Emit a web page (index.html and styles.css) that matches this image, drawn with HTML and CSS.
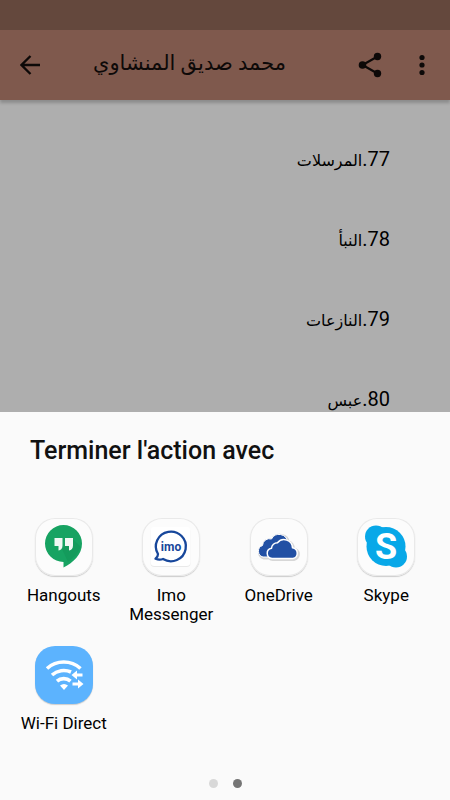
FILE: index.html
```html
<!DOCTYPE html>
<html lang="fr">
<head>
<meta charset="utf-8">
<meta name="viewport" content="width=device-width, initial-scale=1">
<title>Terminer l'action avec</title>
<link rel="stylesheet" href="styles.css">
</head>
<body>
<div class="screen">
  <div class="app">
    <div class="status-bar"></div>
    <header class="toolbar">
      <button class="icon-button" type="button" aria-label="Retour">
        <svg width="20" height="20" viewBox="0 0 20 20"><path d="M20 10H2M10.500 1L1.500 10l9 9" fill="none" stroke="#0d0908" stroke-width="2.300"/></svg>
      </button>
      <h1 class="toolbar-title" lang="ar" dir="rtl">محمد صديق المنشاوي</h1>
      <button class="icon-button" type="button" aria-label="Partager">
        <svg width="24" height="26" viewBox="0 0 24 26"><path d="M19.500 4.500L4.500 13l15 8.500" fill="none" stroke="#0d0908" stroke-width="2.200"/><g fill="#0d0908"><circle cx="19.500" cy="4.500" r="3.700"/><circle cx="4.500" cy="13" r="3.800"/><circle cx="19.500" cy="21.500" r="3.700"/></g></svg>
      </button>
      <button class="icon-button" type="button" aria-label="Plus d'options">
        <svg width="6" height="22" viewBox="0 0 6 22"><g fill="#0d0908"><circle cx="3" cy="3.500" r="2.600"/><circle cx="3" cy="11" r="2.600"/><circle cx="3" cy="18.500" r="2.600"/></g></svg>
      </button>
    </header>
    <ul class="suras" lang="ar" dir="rtl">
      <li><span>77.<span class="sura-name">المرسلات</span></span></li>
      <li><span>78.<span class="sura-name">النبأ</span></span></li>
      <li><span>79.<span class="sura-name">النازعات</span></span></li>
      <li><span>80.<span class="sura-name">عبس</span></span></li>
    </ul>
  </div>

  <section class="sheet" role="dialog" aria-labelledby="sheet-title">
    <h2 class="sheet-title" id="sheet-title">Terminer l'action avec</h2>
    <div class="targets">
      <button class="target" type="button">
        <span class="tile">
          <svg width="58" height="58" viewBox="0 0 58 58">
            <path d="M28.500 7a18.500 18.500 0 0 0 0 37v5.500c10-5 18.500-13 18.500-24A18.500 18.500 0 0 0 28.500 7z" fill="#17a362"/>
            <path d="M27 31l6 13 8-7 5-8-9-8.500z" fill="#149b5c"/>
            <path d="M19.500 20h8v7.500c0 3-1.500 4.500-4 5V28h-4zM30 20h8v7.500c0 3-1.500 4.500-4 5V28h-4z" fill="#f1f8f4"/>
          </svg>
        </span>
        <span class="label">Hangouts</span>
      </button>
      <button class="target" type="button">
        <span class="tile">
          <svg width="58" height="58" viewBox="0 0 58 58">
            <rect x="8.500" y="10" width="40" height="39" rx="4" fill="#e9e9e9"/>
            <rect x="8.500" y="9" width="40" height="39" rx="4" fill="#fff"/>
            <path d="M16 36A15 14.800 0 1 1 21 41c-2.500 1-5 .8-7.500-.2 1.700-1.200 2.500-2.500 2.500-4.800z" fill="#fff" stroke="#17479b" stroke-width="2.300" stroke-linejoin="round"/>
            <text class="imo-text" x="29" y="32.500" text-anchor="middle">imo</text>
          </svg>
        </span>
        <span class="label">Imo Messenger</span>
      </button>
      <button class="target" type="button">
        <span class="tile">
          <svg width="58" height="58" viewBox="0 0 58 58">
            <g transform="translate(-1 0)">
            <g stroke="#d7d7d7" stroke-width="3" fill="#d7d7d7" transform="translate(1 1)"><path d="M14 39a6 6 0 0 1-.5-11.500 7 7 0 0 1 9-6.500 8.500 8.500 0 0 1 16 3l-8 15zM23 40.500a5 5 0 0 1-.5-10 6 6 0 0 1 6-5.500 8.500 8.500 0 0 1 15 5 5.300 5.300 0 0 1 .5 10.500z"/></g>
            <path d="M14 39a6 6 0 0 1-.5-11.500 7 7 0 0 1 9-6.500 8.500 8.500 0 0 1 16 3l-8 15z" fill="#2250a4" stroke="#fff" stroke-width="1"/>
            <path d="M23 40.500a5.200 5.200 0 0 1-.5-10.300 6 6 0 0 1 6-5.500 8.500 8.500 0 0 1 15 5 5.500 5.500 0 0 1 .5 10.800z" fill="#2250a4" stroke="#fff" stroke-width="1.500"/>
            </g>
          </svg>
        </span>
        <span class="label">OneDrive</span>
      </button>
      <button class="target" type="button">
        <span class="tile">
          <svg width="58" height="58" viewBox="0 0 58 58">
            <g fill="#08a8e8"><circle cx="29" cy="28.500" r="19.500"/><circle cx="19" cy="18.500" r="11"/><circle cx="39" cy="38.500" r="11"/></g>
            <text class="skype-text" x="29" y="41" text-anchor="middle">S</text>
          </svg>
        </span>
        <span class="label">Skype</span>
      </button>
      <button class="target" type="button">
        <span class="tile tile-blue">
          <svg width="58" height="58" viewBox="0 0 58 58">
            <g fill="none" stroke="#fff" stroke-width="3.600">
              <path d="M12 22.500a25 25 0 0 1 33.500 0"/>
              <path d="M17 29a17.500 17.500 0 0 1 19-3"/>
              <path d="M22 35.200a10 10 0 0 1 13.500 0"/>
            </g>
            <g fill="#fff"><path d="M25 39.500q4-3 8 0l-4 4.500z"/>
            <path d="M36.500 29l5.500-4.500v3h5.500v3H42v3zM48.500 38l-5.500-4.500v3h-5.500v3H43v3z"/></g>
          </svg>
        </span>
        <span class="label">Wi-Fi Direct</span>
      </button>
    </div>
    <div class="pager"><span class="dot"></span><span class="dot dot-active"></span></div>
  </section>
</div>
</body>
</html>
```
FILE: styles.css
```css
* {
  box-sizing: border-box;
}

body {
  margin: 0;
  font-family: Roboto, "DejaVu Sans", sans-serif;
  color: #000;
}

button {
  padding: 0;
  border: 0;
  background: none;
  font: inherit;
  color: inherit;
}

svg {
  display: block;
}

.screen {
  position: relative;
  min-height: 100vh;
  background: #aeaeae;
  overflow: hidden;
}

.status-bar {
  height: 30px;
  background: #64483d;
}

.toolbar {
  display: flex;
  align-items: center;
  height: 70px;
  padding: 0 12px 0 10px;
  background: #7f594d;
  box-shadow: 0 3px 3px rgba(0, 0, 0, 0.2);
}

.icon-button {
  display: flex;
  align-items: center;
  justify-content: center;
  width: 40px;
  height: 40px;
  flex: none;
}

.icon-button:last-child {
  width: 32px;
  margin-left: 16px;
}

.toolbar-title {
  flex: 1;
  margin: 0;
  padding: 0 64px 4px 0;
  font-size: 21px;
  font-weight: 400;
  line-height: 32px;
  white-space: nowrap;
  color: #0d0908;
}

.suras {
  margin: 0;
  padding: 19px 60px 0;
  list-style: none;
  font-size: 20px;
}

.suras li {
  display: flex;
  align-items: center;
  height: 80px;
}

.sura-name {
  font-size: 16px;
}

.sheet {
  position: absolute;
  left: 0;
  right: 0;
  bottom: 0;
  padding: 24px 10px 12px;
  background: #fafafa;
}

.sheet-title {
  margin: 0 20px 52px;
  font-size: 25px;
  font-weight: 500;
  line-height: 30px;
  color: #111;
}

.targets {
  display: grid;
  grid-template-columns: repeat(4, 1fr);
  row-gap: 22px;
}

.target {
  display: flex;
  flex-direction: column;
  align-items: center;
  gap: 10px;
}

.tile {
  width: 58px;
  height: 58px;
  border-radius: 20px;
  background: #fcfcfc;
  box-shadow: inset 0 0 0 1px #e9e9e9, 0 1px 1px #ccc;
}

.tile-blue {
  background: #5cb3fe;
  box-shadow: 0 1px 1px #ccc;
}

.label {
  font-size: 17px;
  line-height: 19px;
  text-align: center;
}

.imo-text {
  font: 700 12px Roboto, sans-serif;
  fill: #17479b;
}

.skype-text {
  font: 700 36px Roboto, sans-serif;
  fill: #fff;
}

.pager {
  display: flex;
  justify-content: center;
  gap: 15px;
  margin-top: 46px;
}

.dot {
  width: 9px;
  height: 9px;
  border-radius: 50%;
  background: #d8d8d8;
}

.dot-active {
  background: #757575;
}
```
